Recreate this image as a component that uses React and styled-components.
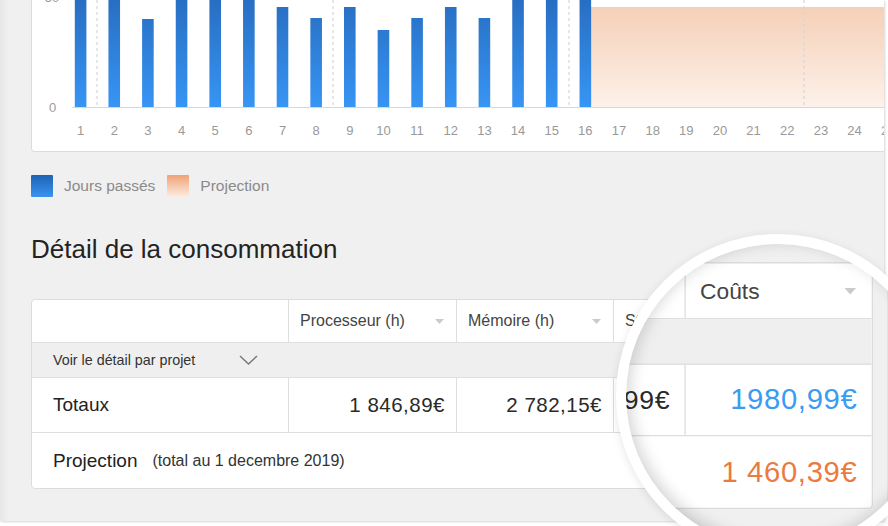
import styled, { createGlobalStyle } from "styled-components";

const GlobalStyle = createGlobalStyle`
  html, body {
    margin: 0;
    padding: 0;
    background: #ffffff;
    font-family: "Liberation Sans", Arial, sans-serif;
  }
`;

const days = Array.from({ length: 25 }, (_, i) => i + 1);
// top of each past-day bar, in page pixels (values above the visible area start at -6)
const barTops = [-6, -6, 19, -6, -6, -6, 7, 18, 7, 30, 18, 7, 18, -6, -6, -6];
const dayX = (d) => 80.6 + (d - 1) * 33.65;
const gridLines = [97, 333, 569, 804];

const columns = "257px 168px 157px 115px 1fr";

function Chart() {
  return (
    <svg width="899" height="151" viewBox="32 0 899 151" style={{ display: "block" }}>
      <defs>
        <linearGradient id="bar" x1="0" y1="-6" x2="0" y2="107" gradientUnits="userSpaceOnUse">
          <stop offset="0" stopColor="#276cbf" />
          <stop offset="1" stopColor="#3795f4" />
        </linearGradient>
        <linearGradient id="proj" x1="0" y1="0" x2="0" y2="1">
          <stop offset="0" stopColor="#f5d0b8" />
          <stop offset="1" stopColor="#fdf1ea" />
        </linearGradient>
      </defs>
      <text x="52" y="2" fontSize="13" fill="#9a9a9a" textAnchor="middle">50</text>
      <text x="52.5" y="112" fontSize="13" fill="#9a9a9a" textAnchor="middle">0</text>
      <rect x="591" y="7" width="340" height="100" fill="url(#proj)" />
      {gridLines.map((x) => (
        <line key={x} x1={x} y1="0" x2={x} y2="106" stroke="#d6d6d6" strokeWidth="1.2" strokeDasharray="3 3" />
      ))}
      {barTops.map((top, i) => (
        <rect key={i} x={dayX(i + 1) - 5.8} y={top} width="11.6" height={107 - top} fill="url(#bar)" />
      ))}
      <line x1="72" y1="107.5" x2="931" y2="107.5" stroke="#d8d8d8" strokeWidth="1" />
      {days.map((d) => (
        <text key={d} x={dayX(d)} y="135" fontSize="13" fill="#999999" textAnchor="middle">
          {d}
        </text>
      ))}
    </svg>
  );
}

function Caret() {
  return (
    <svg width="9" height="5" viewBox="0 0 9 5">
      <path d="M0 0h9L4.5 5z" fill="#cbcbcb" />
    </svg>
  );
}

function Chevron() {
  return (
    <svg width="19" height="10" viewBox="0 0 19 10">
      <path d="M1 1l8.5 8L18 1" fill="none" stroke="#777" strokeWidth="1.4" />
    </svg>
  );
}

function Dashboard() {
  return (
    <Panel>
      <ChartCard>
        <Chart />
      </ChartCard>
      <Legend>
        <Swatch $from="#1f63b5" $to="#3a93f0" />
        <LegendLabel>Jours passés</LegendLabel>
        <Swatch $from="#f0a274" $to="#fbede4" />
        <LegendLabel>Projection</LegendLabel>
      </Legend>
      <Title>Détail de la consommation</Title>
      <TableCard>
        <GridRow $height={43}>
          <Cell />
          <HeadCell>
            Processeur (h) <Caret />
          </HeadCell>
          <HeadCell>
            Mémoire (h) <Caret />
          </HeadCell>
          <HeadCell>
            Stockage <Caret />
          </HeadCell>
          <HeadCell $last $big>
            Coûts <Caret />
          </HeadCell>
        </GridRow>
        <DetailRow>
          <span>Voir le détail par projet</span>
          <Chevron />
        </DetailRow>
        <GridRow $height={55}>
          <LabelCell>Totaux</LabelCell>
          <ValueCell>1 846,89€</ValueCell>
          <ValueCell>2 782,15€</ValueCell>
          <ValueCell>1 351,99€</ValueCell>
          <ValueCell $last $big $color="#3a9bf2">1980,99€</ValueCell>
        </GridRow>
        <ProjectionRow>
          <LabelCell as="div">
            Projection <Note>(total au 1 decembre 2019)</Note>
          </LabelCell>
          <ValueCell as="div" $last $big $color="#ea7b3f">1 460,39€</ValueCell>
        </ProjectionRow>
      </TableCard>
    </Panel>
  );
}

export default function App() {
  return (
    <>
      <GlobalStyle />
      <Stage>
        <Dashboard />
        <Lens>
          <LensView>
            <Zoomed>
              <Dashboard />
            </Zoomed>
          </LensView>
        </Lens>
      </Stage>
    </>
  );
}

const Stage = styled.div`
  position: relative;
  width: 888px;
  height: 526px;
  overflow: hidden;
  background: #ffffff;
`;

const Panel = styled.div`
  box-sizing: border-box;
  width: 884px;
  height: 521px;
  padding-left: 31px;
  overflow: hidden;
  background: linear-gradient(to right, #e7e7e7, #f0f0f0 9px);
  box-shadow: 1px 1px 2px rgba(0, 0, 0, 0.16);
  display: flex;
  flex-direction: column;
  align-items: flex-start;
`;

const ChartCard = styled.div`
  flex: none;
  width: 900px;
  background: #ffffff;
  border: 1px solid #dcdcdc;
  border-top: none;
  border-radius: 0 0 4px 4px;
`;

const Legend = styled.div`
  display: flex;
  align-items: center;
  margin-top: 23px;
  height: 22px;
`;

const Swatch = styled.span`
  width: 22px;
  height: 22px;
  border-radius: 1px;
  background: linear-gradient(${(p) => p.$from}, ${(p) => p.$to});
  & + span {
    margin-left: 11px;
  }
`;

const LegendLabel = styled.span`
  font-size: 15.5px;
  color: #8a8a8a;
  margin-right: 12px;
`;

const Title = styled.h2`
  margin: 37px 0 0;
  font-size: 26px;
  line-height: 30px;
  font-weight: 400;
  color: #232323;
`;

const TableCard = styled.div`
  box-sizing: border-box;
  width: 842px;
  margin-top: 35px;
  background: #ffffff;
  border: 1px solid #dcdcdc;
  border-radius: 4px;
  overflow: hidden;
`;

const GridRow = styled.div`
  box-sizing: border-box;
  display: grid;
  grid-template-columns: ${columns};
  height: ${(p) => p.$height}px;
  border-bottom: 1px solid #dedede;
`;

const Cell = styled.div`
  box-sizing: border-box;
  border-right: ${(p) => (p.$last ? "none" : "1px solid #dedede")};
  display: flex;
  align-items: center;
`;

const HeadCell = styled(Cell)`
  justify-content: space-between;
  padding: 0 12px 0 11px;
  font-size: ${(p) => (p.$big ? "17.5px" : "16px")};
  color: #444444;
  white-space: nowrap;
`;

const LabelCell = styled(Cell)`
  padding-left: 21px;
  font-size: 19px;
  color: #222222;
`;

const ValueCell = styled(Cell)`
  justify-content: flex-end;
  padding-right: 11px;
  font-size: ${(p) => (p.$big ? "22.5px" : "20.5px")};
  letter-spacing: 0.5px;
  color: ${(p) => p.$color || "#2a2a2a"};
`;

const DetailRow = styled.div`
  box-sizing: border-box;
  display: flex;
  align-items: center;
  gap: 44px;
  height: 35px;
  padding-left: 21px;
  background: #efefef;
  border-bottom: 1px solid #dedede;
  font-size: 14.3px;
  color: #333333;
`;

const ProjectionRow = styled.div`
  display: flex;
  justify-content: space-between;
  height: 55px;
  & > div {
    border-right: none;
  }
`;

const Note = styled.span`
  margin-left: 15px;
  font-size: 16px;
  color: #333333;
`;

const Lens = styled.div`
  position: absolute;
  left: 616px;
  top: 234px;
  box-sizing: border-box;
  width: 324px;
  height: 324px;
  padding: 10px;
  border-radius: 50%;
  background: #ffffff;
  box-shadow: 0 2px 10px rgba(0, 0, 0, 0.1);
`;

const LensView = styled.div`
  position: relative;
  width: 304px;
  height: 304px;
  border-radius: 50%;
  overflow: hidden;
  &::after {
    content: "";
    position: absolute;
    inset: 0;
    border-radius: 50%;
    box-shadow: inset 3px -3px 16px rgba(0, 0, 0, 0.18);
  }
`;

const Zoomed = styled.div`
  position: absolute;
  left: -626px;
  top: -244px;
  width: 888px;
  height: 526px;
  background: #ffffff;
  transform-origin: 873px 422px;
  transform: scale(1.3);
`;
